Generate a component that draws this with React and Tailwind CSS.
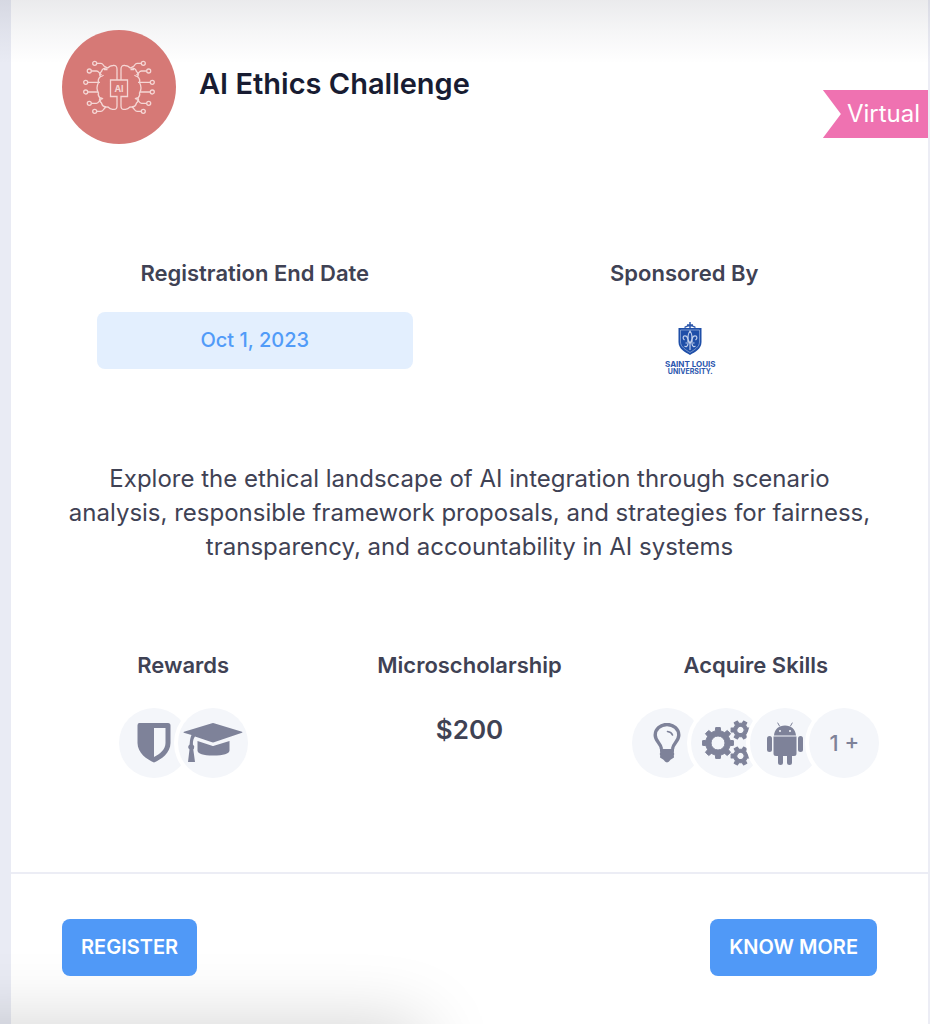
const rewards = [
  { id: 'badge', label: 'Badge', Icon: ShieldIcon },
  { id: 'degree', label: 'Certificate', Icon: CapIcon },
];

const skills = [
  { id: 'ideas', label: 'Ideation', Icon: BulbIcon },
  { id: 'systems', label: 'Systems', Icon: GearsIcon },
  { id: 'android', label: 'Android', Icon: AndroidIcon },
];

function ShieldIcon() {
  return (
    <svg viewBox="0 0 34 40" className="w-[34px] h-10" fill="currentColor" aria-hidden="true">
      <path
        fillRule="evenodd"
        d="M2 0H31Q33.500 0 33.500 2.500V20C33.500 30 24 36.500 17 39.500C10 36.500 0.500 30 0.500 20V2.500Q0.500 0 2 0ZM17 5V34C23 31 28.500 26.500 28.500 20V5Z"
      />
    </svg>
  );
}

function CapIcon() {
  return (
    <svg viewBox="0 0 60 42" className="w-[60px] h-[42px]" fill="currentColor" aria-hidden="true">
      <path d="M0.800 10.800Q0 10.300 1 9.800L29 1.200Q30 0.900 31 1.200L59 9.800Q60 10.300 59 10.800L31 20.300Q30 20.600 29 20.300L12 14.500Q9.800 17 9.900 22.500Q12 24 11 26.500L10.300 27.500L12 40H5L6.500 27.500Q3.800 25 6.600 22.500Q7 16 8.500 13Z" />
      <path d="M14.500 19L29 23.800Q30 24.200 31 23.800L46.500 19V28.500Q46 33.500 30 33.500Q15 33.500 14.500 28.500Z" />
    </svg>
  );
}

function BulbIcon() {
  return (
    <svg viewBox="0 0 28 40" className="w-7 h-10" aria-hidden="true">
      <path
        d="M8.500 26C8 20 2.200 18.500 2.200 12A11.800 10.500 0 0 1 25.800 12C25.800 18.500 20 20 19.500 26"
        fill="none"
        stroke="currentColor"
        strokeWidth="3.400"
      />
      <path d="M14.500 8.500Q18.500 9 19.500 12" fill="none" stroke="currentColor" strokeWidth="1.600" strokeLinecap="round" />
      <path
        d="M7 26H21V28L20.800 29.500L21.300 31L20.800 32.500L21 34.500L17.500 36.800Q14 42 10.500 36.800L7 34.500L7.200 32.500L6.700 31L7.200 29.500L7 28Z"
        fill="currentColor"
      />
    </svg>
  );
}

function gearPath(cx, cy, outer, inner, hole, teeth) {
  const step = (Math.PI * 2) / teeth;
  const points = [];
  for (let i = 0; i < teeth; i++) {
    const a = i * step - Math.PI / 2;
    [
      [inner, -0.27],
      [outer, -0.19],
      [outer, 0.19],
      [inner, 0.27],
    ].forEach(([r, k]) => {
      points.push(`${cx + r * Math.cos(a + k * step)} ${cy + r * Math.sin(a + k * step)}`);
    });
  }
  return `M${points.join('L')}ZM${cx - hole} ${cy}a${hole} ${hole} 0 1 0 ${hole * 2} 0a${hole} ${hole} 0 1 0 ${-hole * 2} 0Z`;
}

function GearsIcon() {
  return (
    <svg
      viewBox="0 0 50 46"
      className="w-[50px] h-[46px]"
      fill="currentColor"
      stroke="currentColor"
      strokeLinejoin="round"
      fillRule="evenodd"
      aria-hidden="true"
    >
      <path d={gearPath(17, 23, 15.6, 12.4, 7, 8)} />
      <g transform="rotate(30 39.500 10)">
        <path d={gearPath(39.5, 10, 9.6, 7, 3.6, 6)} />
      </g>
      <g transform="rotate(30 39.500 36)">
        <path d={gearPath(39.5, 36, 9.6, 7, 3.6, 6)} />
      </g>
    </svg>
  );
}

function AndroidIcon() {
  return (
    <svg viewBox="0 0 36 44" className="w-9 h-11" fill="currentColor" aria-hidden="true">
      <path d="M12.500 5L10.800 2M23.500 5L25.200 2" stroke="currentColor" strokeLinecap="round" />
      <path
        fillRule="evenodd"
        d="M7 14.500C7.500 8 12 4.500 18 4.500S28.500 8 29 14.500ZM12 10a1 1 0 1 0 2 0a1 1 0 1 0 -2 0M22 10a1 1 0 1 0 2 0a1 1 0 1 0 -2 0"
      />
      <rect x="0" y="15" width="5" height="16" rx="2.500" />
      <rect x="31" y="15" width="5" height="16" rx="2.500" />
      <path d="M6.500 15.500H29.500V32.500Q29.500 35 27 35H25V41.500Q25 44 22.500 44T20 41.500V35H16V41.500Q16 44 13.500 44T11 41.500V35H9Q6.500 35 6.500 32.500Z" />
    </svg>
  );
}

// one half of the brain, the other half is mirrored
function BrainHalf() {
  return (
    <g>
      <path d="M36 20H27.500V36.500H34V46Q34 49.500 31 49.300H29.500Q27 49 25 47Q19.500 47.500 18.500 43Q15.500 40.500 17 38Q14.500 35.500 15.500 33Q12.500 28 15.500 22.500Q14.500 19 17.500 16.500Q15.500 14 18.500 11.500Q19.500 7.500 25 7.800Q27 5.500 30 5.500Q34 5 34 9V20" />
      <path d="M24.500 8L21 6Q19.500 3.300 18 3.300H13.700M18.500 15L16 12.500Q15 11 13.500 11H8.300M17 22.300H4.700M15 32H4.700M18.500 39L16 41.500Q15 43.300 13.500 43.300H8.300M23 46.500L21 49Q19.500 51.300 18 51.300H13.700" />
      <path d="M17.500 16.500Q19.500 16.500 20.500 15M17 38Q19 38 20 39M21 9.500L24.500 9.500" />
      <circle cx="11.700" cy="3.300" r="2" />
      <circle cx="6.300" cy="11" r="2" />
      <circle cx="2.700" cy="22.300" r="2" />
      <circle cx="2.700" cy="32" r="2" />
      <circle cx="6.300" cy="43.300" r="2" />
      <circle cx="11.700" cy="51.300" r="2" />
    </g>
  );
}

function BrainLogo() {
  return (
    <svg viewBox="0 0 72 54" className="w-[72px] h-[54px]" role="img" aria-label="AI brain">
      <g fill="none" stroke="#f5d6d4" strokeWidth="1.300">
        <BrainHalf />
        <g transform="translate(72 0) scale(-1 1)">
          <BrainHalf />
        </g>
      </g>
      <text x="36" y="31.500" textAnchor="middle" fontSize="9" fontWeight="700" fill="#f5d6d4">
        AI
      </text>
    </svg>
  );
}

function SponsorLogo() {
  return (
    <div className="flex flex-col items-center font-bold text-[#2a56ae]">
      <svg viewBox="0 0 24 34" className="w-6 h-[34px]" aria-hidden="true">
        <path d="M12 0V6M9 3H15M6.500 5.500Q12 1.500 17.500 5.500" stroke="#2d58ac" strokeWidth="1.500" fill="none" />
        <path d="M0.500 6H23.500V20C23.500 27 17 30 12 33C7 30 0.500 27 0.500 20Z" fill="#1f4fa8" />
        <path d="M2.500 8H21.500V20C21.500 25 16 28 12 30.500C8 28 2.500 25 2.500 20Z" fill="none" stroke="#9db4dc" strokeWidth="0.700" />
        <path
          d="M12 9Q8.500 14 11 20H13Q15.500 14 12 9ZM10 20Q10 13 6 14Q4 16 6.500 18M14 20Q14 13 18 14Q20 16 17.500 18M7.500 21H16.500M12 21V28M10 22Q9 26 6.500 24M14 22Q15 26 17.500 24"
          fill="none"
          stroke="#c3d1ec"
          strokeWidth="1.200"
        />
      </svg>
      <span className="mt-1 text-[8px] leading-[8px]">SAINT LOUIS</span>
      <span className="text-[7px] leading-[7px]">UNIVERSITY.</span>
    </div>
  );
}

function IconBubble({ children, label }) {
  return (
    <li
      aria-label={label}
      className="flex items-center justify-center size-[70px] shrink-0 -ml-[11px] first:ml-0 rounded-full bg-[#f4f6fa] ring-4 ring-white text-[#7e8299]"
    >
      {children}
    </li>
  );
}

function Label({ children }) {
  return <h2 className="text-[22px] leading-8 font-semibold text-[#3f4254]">{children}</h2>;
}

function ActionButton({ children }) {
  return (
    <button
      type="button"
      className="px-[19px] py-3 rounded-lg bg-[#5099f7] text-[20px] leading-[33px] font-semibold text-white"
    >
      {children}
    </button>
  );
}

export default function App() {
  return (
    <div className="relative min-h-screen bg-[#e9ebf4] pl-[11px] font-['Inter',sans-serif] text-[#3f4254]">
      <article className="relative flex flex-col min-h-screen bg-white border-r-2 border-[#ecedf5]">
        <header className="relative z-10 flex items-center gap-[23px] px-[51px] pt-[30px]">
          <div className="flex items-center justify-center size-[114px] shrink-0 rounded-full bg-[#d67976]">
            <BrainLogo />
          </div>
          <h1 className="pb-1.5 text-[29px] leading-9 font-semibold text-[#181c32]">AI Ethics Challenge</h1>
        </header>

        <div className="absolute right-0 top-[90px] h-12 pl-6 pr-2 flex items-center bg-[#ef72b1] text-[24px] text-white [clip-path:polygon(0_0,100%_0,100%_100%,0_100%,18px_50%)]">
          Virtual
        </div>

        <section className="grid grid-cols-2 px-[29px] mt-[113px] text-center">
          <div className="px-[57px]">
            <Label>Registration End Date</Label>
            <p className="mt-[23px] py-3 rounded-lg bg-[#e3effe] text-[20px] leading-[33px] font-medium text-[#519bf8]">
              Oct 1, 2023
            </p>
          </div>
          <div>
            <Label>Sponsored By</Label>
            <div className="mt-[33px] flex justify-center pl-3">
              <SponsorLogo />
            </div>
          </div>
        </section>

        <p className="px-[51px] mt-[87px] text-[24px] leading-[34px] text-center">
          Explore the ethical landscape of AI integration through scenario
          <br />
          analysis, responsible framework proposals, and strategies for fairness,
          <br />
          transparency, and accountability in AI systems
        </p>

        <section className="grid grid-cols-3 px-[29px] mt-[85px] mb-[94px] text-center">
          <div>
            <Label>Rewards</Label>
            <ul className="flex justify-center mt-[27px]">
              {rewards.map(({ id, label, Icon }) => (
                <IconBubble key={id} label={label}>
                  <Icon />
                </IconBubble>
              ))}
            </ul>
          </div>
          <div>
            <Label>Microscholarship</Label>
            <p className="mt-[31px] text-[26px] leading-9 font-semibold">$200</p>
          </div>
          <div>
            <Label>Acquire Skills</Label>
            <ul className="flex justify-center mt-[27px]">
              {skills.map(({ id, label, Icon }) => (
                <IconBubble key={id} label={label}>
                  <Icon />
                </IconBubble>
              ))}
              <IconBubble>
                <span className="text-[22px] font-medium">1 +</span>
              </IconBubble>
            </ul>
          </div>
        </section>

        <footer className="relative z-10 flex items-center justify-between px-[51px] py-[45px] border-t-2 border-[#ecedf5]">
          <ActionButton>REGISTER</ActionButton>
          <ActionButton>KNOW MORE</ActionButton>
        </footer>
      </article>

      {/* soft shadows at the scroll edges */}
      <div className="absolute inset-x-0 top-0 h-16 bg-linear-to-b from-[#181c32]/9 via-[#181c32]/4 to-transparent pointer-events-none" />
      <div className="absolute inset-x-0 bottom-0 h-20 overflow-hidden pointer-events-none">
        <div className="mt-20 -ml-20 w-[54%] h-20 shadow-[0_0_72px_rgba(0,0,0,0.18)]" />
      </div>
    </div>
  );
}
